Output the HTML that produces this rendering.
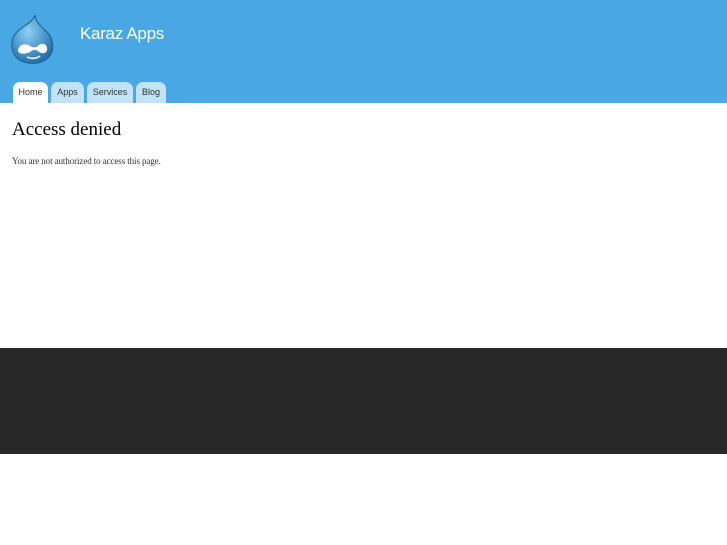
<!DOCTYPE html>
<html><head><style>
body{margin:0;width:727px;height:545px;background:#fff;overflow:hidden;position:relative}
#hdr{position:absolute;left:0;top:0;width:727px;height:103px;background:#49a8e4}
#title{position:absolute;left:80px;top:24px;font:17px "Liberation Sans",sans-serif;color:#fff;letter-spacing:-0.3px}
.tab{position:absolute;top:82px;height:21px;background:#c2e2f6;border-radius:7px 7px 0 0;font:9px "Liberation Sans",sans-serif;color:#333;text-align:center;line-height:20px}
h1{position:absolute;left:12px;top:119px;margin:0;font:normal 19px "Liberation Serif",serif;color:#000}
p{position:absolute;left:12px;top:156px;margin:0;font:9px "Liberation Serif",serif;color:#333;letter-spacing:-0.1px}
#ft{position:absolute;left:0;top:348px;width:727px;height:106px;background:#292929}
</style></head><body>
<div id="hdr">
<svg style="position:absolute;left:9px;top:14px" width="46" height="50" viewBox="0 0 46 50">
<defs><radialGradient id="g" cx="40%" cy="35%" r="70%"><stop offset="0" stop-color="#8fd0f5"/><stop offset="1" stop-color="#1d6fa8"/></radialGradient></defs>
<path d="M26 1 C24 8 14 12 8 18 C1 25 1 38 9 45 C17 51 31 51 39 44 C46 37 45 25 38 18 C33 13 27 9 26 1Z" fill="url(#g)" stroke="#1a5f90" stroke-width="1"/>
<path d="M9 36 C10 30 17 29 21 32 C24 34 27 34 30 31 C34 28 39 31 38 36 C37 40 32 40 29 37 C26 35 23 36 21 38 C18 40 9 41 9 36Z" fill="#fff"/>
<path d="M18 43 C22 45 27 45 31 42" stroke="#fff" stroke-width="1.5" fill="none"/>
</svg>
<div id="title">Karaz Apps</div>
<div class="tab" style="left:13px;width:35px;background:#fff">Home</div>
<div class="tab" style="left:51px;width:33px">Apps</div>
<div class="tab" style="left:87px;width:46px">Services</div>
<div class="tab" style="left:136px;width:30px">Blog</div>
</div>
<h1>Access denied</h1>
<p>You are not authorized to access this page.</p>
<div id="ft"></div>
</body></html>
